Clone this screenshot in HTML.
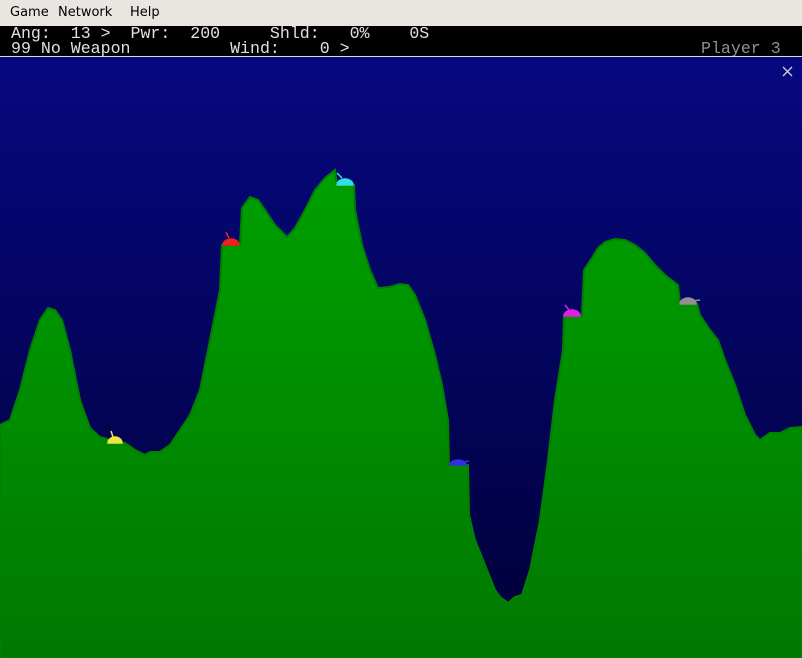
<!DOCTYPE html>
<html><head><style>
html,body{margin:0;padding:0;width:802px;height:658px;overflow:hidden;background:#e9e5e0;}
#menu{position:absolute;left:0;top:0;width:802px;height:25px;background:#e9e5e0;font:13px "DejaVu Sans","Liberation Sans",sans-serif;color:#000;}
#menu span{position:absolute;top:5px;}
#bar{position:absolute;left:0;top:26px;width:802px;height:30px;background:#000;font:16.6px/15px "Liberation Mono",monospace;color:#e0e0e0;white-space:pre;}
#bar div{position:absolute;left:11px;}
#game{position:absolute;left:0;top:57px;}
</style></head><body>
<div id="menu"><span style="left:10px">Game</span><span style="left:58px">Network</span><span style="left:130px">Help</span></div>
<div id="bar"><div style="top:0">Ang:  13 >  Pwr:  200     Shld:   0%    0S</div><div style="top:15px">99 No Weapon          Wind:    0 ></div><div style="top:15px;left:701px;color:#909090">Player 3</div></div>
<div style="position:absolute;left:0;top:56px;width:802px;height:1px;background:#d8d8d8"></div>
<svg id="game" width="802" height="601" viewBox="0 57 802 601">
<defs>
<linearGradient id="sky" x1="0" y1="0" x2="0" y2="1"><stop offset="0" stop-color="#060880"/><stop offset="1" stop-color="#000038"/></linearGradient>
<linearGradient id="gr" x1="0" y1="0" x2="0" y2="1"><stop offset="0" stop-color="#00a000"/><stop offset="1" stop-color="#007800"/></linearGradient>
</defs>
<rect x="0" y="57" width="802" height="601" fill="url(#sky)"/>
<polygon fill="url(#gr)" stroke="#008000" stroke-width="2" points="0,425 10,420 20,390 30,350 40,320 48,308 55,310 62,320 70,350 80,400 90,428 100,437 110,440 125,443 135,450 145,455 150,452 160,452 170,445 180,430 190,415 200,390 210,340 220,290 222,245 240,245 242,208 250,197 258,200 265,210 275,225 287,237 295,228 305,210 315,190 325,178 335,170 337,185 354,185 355,210 362,245 370,270 378,288 390,287 400,284 408,285 415,295 425,320 435,355 442,385 448,420 449,465 468,465 469,515 475,540 485,565 495,590 500,597 508,603 515,597 522,595 530,570 540,520 548,460 555,400 563,350 564,316 582,316 584,270 592,258 598,248 605,242 615,239 625,240 635,245 645,253 655,265 665,275 678,285 680,304 697,304 700,315 710,330 718,340 725,360 735,385 745,415 755,435 760,440 770,433 780,433 790,428 802,427 802,658 0,658"/>
<g stroke-width="1.5">
<path d="M108,443 a7,6 0 0 1 14,0 z M113,437 l-2,-6" fill="#e8e840" stroke="#e8e840"/>
<path d="M223,245 a8,6 0 0 1 16,0 z M229,238 l-3,-6" fill="#f02020" stroke="#f02020"/>
<path d="M337,185 a8,6 0 0 1 16,0 z M342,178 l-5,-5" fill="#30e0e0" stroke="#30e0e0"/>
<path d="M450,465 a8,5 0 0 1 16,0 z M463,462 l6,-1" fill="#3030e0" stroke="#3030e0"/>
<path d="M564,316 a8,6 0 0 1 16,0 z M569,310 l-4,-5" fill="#e020e0" stroke="#e020e0"/>
<path d="M680,304 a8,6 0 0 1 16,0 z M693,301 l7,-1" fill="#909090" stroke="#909090"/>
</g>
<path d="M783,67 l9,9 M792,67 l-9,9" stroke="#d0d0e0" stroke-width="1.3"/>
</svg>
</body></html>
